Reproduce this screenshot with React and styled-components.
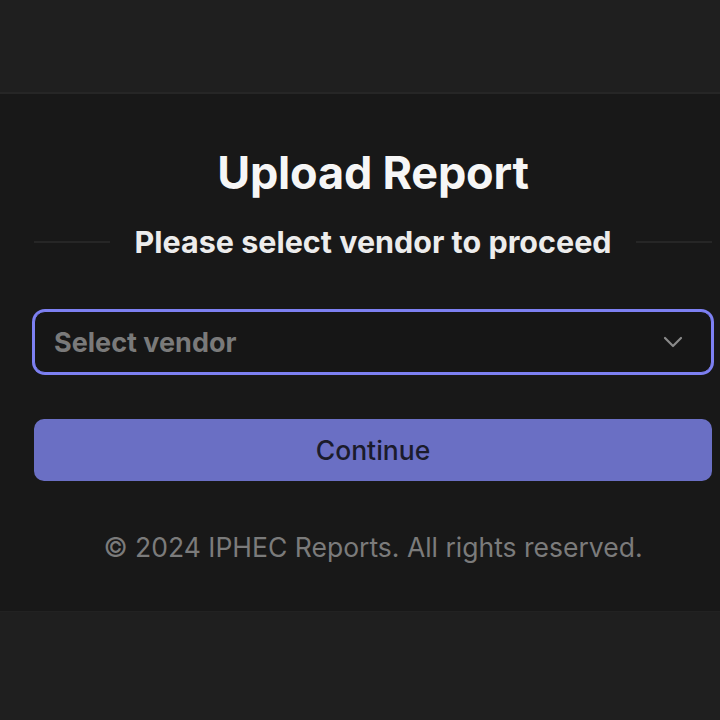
import React from "react";
import styled, { createGlobalStyle } from "styled-components";

const Global = createGlobalStyle`
  html, body { margin: 0; padding: 0; background: #1f1f1f; }
  body { font-family: Inter, "Noto Sans", sans-serif; -webkit-font-smoothing: antialiased; }
`;

const Page = styled.div`
  width: 720px;
  height: 720px;
  overflow: hidden;
  display: flex;
  flex-direction: column;
  background: #1f1f1f;
`;

const TopBar = styled.div`
  height: 92px;
  flex: none;
  border-bottom: 2px solid #262626;
`;

const Card = styled.main`
  flex: none;
  height: 518px;
  box-sizing: border-box;
  background: #181818;
  border-bottom: 1px solid #222;
  padding: 51px 8px 0 34px;
  display: flex;
  flex-direction: column;
  align-items: stretch;
`;

const Title = styled.h1`
  margin: 0;
  text-align: center;
  font-size: 45px;
  line-height: 56px;
  font-weight: 700;
  color: #f6f6f6;
  letter-spacing: -0.2px;
`;

const DividerRow = styled.div`
  display: flex;
  align-items: center;
  gap: 24px;
  margin-top: 21px;
`;

const Rule = styled.div`
  flex: 1;
  height: 2px;
  background: #262626;
`;

const Subtitle = styled.h2`
  margin: 0;
  font-size: 30.5px;
  line-height: 40px;
  font-weight: 700;
  color: #ececec;
  white-space: nowrap;
`;

const Select = styled.div`
  margin-top: 49px;
  height: 62px;
  flex: none;
  box-sizing: border-box;
  border: 1px solid #7d80f2;
  box-shadow: 0 0 0 2px #7d80f2;
  border-radius: 11px;
  display: flex;
  align-items: center;
  justify-content: space-between;
  padding: 0 28px 0 19px;
  background: #161616;
`;

const Placeholder = styled.span`
  font-size: 27px;
  font-weight: 700;
  color: #7a7a7a;
`;

const Button = styled.button`
  margin-top: 46px;
  height: 62px;
  flex: none;
  border: none;
  border-radius: 10px;
  background: #6a6fc4;
  color: #1b1b2b;
  font-family: inherit;
  font-size: 26.5px;
  font-weight: 500;
  cursor: pointer;
`;

const Footer = styled.p`
  margin: 50px 0 0;
  text-align: center;
  font-size: 26.5px;
  line-height: 32px;
  font-weight: 400;
  color: #7b7b7b;
`;

export default function App() {
  return (
    <>
      <Global />
      <Page>
        <TopBar />
        <Card>
          <Title>Upload Report</Title>
          <DividerRow>
            <Rule />
            <Subtitle>Please select vendor to proceed</Subtitle>
            <Rule />
          </DividerRow>
          <Select>
            <Placeholder>Select vendor</Placeholder>
            <svg width="20" height="12" viewBox="0 0 20 12" fill="none">
              <path d="M2 2l8 8 8-8" stroke="#8a8a8a" strokeWidth="2.2" strokeLinecap="round" strokeLinejoin="round" />
            </svg>
          </Select>
          <Button>Continue</Button>
          <Footer>© 2024 IPHEC Reports. All rights reserved.</Footer>
        </Card>
      </Page>
    </>
  );
}
